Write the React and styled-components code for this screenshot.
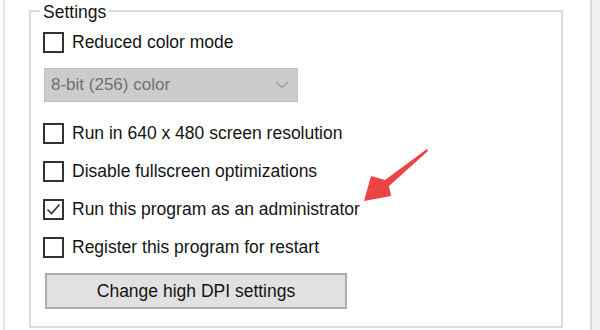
import React from "react";
import styled, { createGlobalStyle } from "styled-components";

const Global = createGlobalStyle`
  html, body { margin: 0; padding: 0; background: #fff; }
  body { font-family: "Liberation Sans", Arial, sans-serif; }
`;

const Page = styled.div`
  position: relative;
  display: flex;
  width: 600px;
  height: 330px;
  padding-left: 3px;
  box-sizing: border-box;
  overflow: hidden;
  background: #fff;
`;

const Edge = styled.div`
  width: 2px;
  flex: none;
  background: ${(p) => p.$color};
`;

const Main = styled.div`
  flex: none;
  padding: 10px 27px 0 24px;
`;

const RightFill = styled.div`
  flex: 1;
  background: #f0f0f0;
`;

const GroupBox = styled.div`
  position: relative;
  box-sizing: border-box;
  width: 534px;
  height: 318px;
  border: 2px solid #dcdcdc;
  padding: 20px 0 0 12px;
  display: flex;
  flex-direction: column;
  align-items: flex-start;
`;

const Legend = styled.div`
  position: absolute;
  top: -10px;
  left: 9px;
  padding: 0 3px;
  background: #fff;
  font-size: 17.5px;
  line-height: 20px;
  color: #141414;
`;

const Row = styled.label`
  display: flex;
  align-items: center;
  gap: 8px;
  height: 21px;
  margin-top: ${(p) => p.$top}px;
  font-size: 17.5px;
  color: #141414;
  white-space: nowrap;
`;

const Box = styled.span`
  box-sizing: border-box;
  width: 21px;
  height: 21px;
  border: 2px solid #333;
  background: #fff;
  flex: none;
  display: flex;
  align-items: center;
  justify-content: center;
`;

const Select = styled.div`
  box-sizing: border-box;
  margin: 15px 0 0 1px;
  width: 254px;
  height: 34px;
  background: #cccccc;
  border: 1px solid #bfbfbf;
  display: flex;
  align-items: center;
  justify-content: space-between;
  padding: 0 8px 0 6px;
  font-size: 17px;
  color: #707070;
`;

const Button = styled.div`
  box-sizing: border-box;
  margin: 15px 0 0 2px;
  width: 302px;
  height: 36px;
  background: #e1e1e1;
  border: 2px solid #adadad;
  display: flex;
  align-items: center;
  justify-content: center;
  font-size: 17.5px;
  color: #141414;
`;

const Arrow = styled.svg`
  position: absolute;
  left: 0;
  top: 0;
  pointer-events: none;
`;

const Check = ({ checked, label, top }) => (
  <Row $top={top}>
    <Box>
      {checked && (
        <svg width="17" height="17" viewBox="0 0 17 17">
          <polyline points="2.5,8.5 6.5,12.5 14.5,3.5" fill="none" stroke="#333" strokeWidth="1.6" />
        </svg>
      )}
    </Box>
    {label}
  </Row>
);

export default function App() {
  return (
    <>
      <Global />
      <Page>
        <Edge $color="#e6e6e6" />
        <Main>
          <GroupBox>
            <Legend>Settings</Legend>
            <Check label="Reduced color mode" top={0} />
            <Select>
              <span>8-bit (256) color</span>
              <svg width="14" height="8" viewBox="0 0 14 8">
                <polyline points="1,1 7,6.5 13,1" fill="none" stroke="#9a9a9a" strokeWidth="1.2" />
              </svg>
            </Select>
            <Check label="Run in 640 x 480 screen resolution" top={21} />
            <Check label="Disable fullscreen optimizations" top={17} />
            <Check checked label="Run this program as an administrator" top={17} />
            <Check label="Register this program for restart" top={17} />
            <Button>Change high DPI settings</Button>
          </GroupBox>
        </Main>
        <Edge $color="#d9d9d9" />
        <RightFill />
        <Arrow width="600" height="330" viewBox="0 0 600 330">
          <polygon
            points="427,149 385,180 371,176 364,201 391,196 389,186 428,151"
            fill="#ec4444"
          />
        </Arrow>
      </Page>
    </>
  );
}
